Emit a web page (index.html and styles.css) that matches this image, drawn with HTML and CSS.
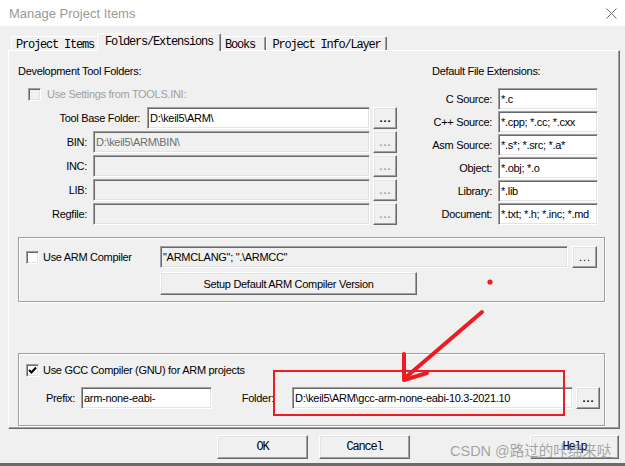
FILE: index.html
```html
<!DOCTYPE html>
<html lang="en">
  <head>
    <meta charset="UTF-8" />
    <meta name="viewport" content="width=device-width, initial-scale=1.0" />
    <title>Manage Project Items</title>

    <link rel="stylesheet" href="styles.css">
  </head>

  <body>
    <div class="titlebar">
      <span class="title">Manage Project Items</span>
      <svg class="close" width="11" height="11" viewBox="0 0 11 11">
        <path d="M0.5 0.5 L10.5 10.5 M10.5 0.5 L0.5 10.5" stroke="#6b6b6b" stroke-width="1" fill="none" />
      </svg>
    </div>

    <div class="tabs">
      <div class="tab tab-items">Project Items</div>
      <div class="tab tab-folders active">Folders/Extensions</div>
      <div class="tab tab-books">Books</div>
      <div class="tab tab-info">Project Info/Layer</div>
    </div>

    <div class="panel">
      <div class="top">
        <div class="folders">
          <div class="heading">Development Tool Folders:</div>
          <div class="check disabled">
            <span class="box"></span>
            <span>Use Settings from TOOLS.INI:</span>
          </div>
          <div class="fields">
            <div class="field base">
              <span class="label">Tool Base Folder:</span>
              <div class="edit">D:\keil5\ARM\</div>
              <button class="more">...</button>
            </div>
            <div class="field">
              <span class="label">BIN:</span>
              <div class="edit disabled">D:\keil5\ARM\BIN\</div>
              <button class="more" disabled>...</button>
            </div>
            <div class="field">
              <span class="label">INC:</span>
              <div class="edit disabled"></div>
              <button class="more" disabled>...</button>
            </div>
            <div class="field">
              <span class="label">LIB:</span>
              <div class="edit disabled"></div>
              <button class="more" disabled>...</button>
            </div>
            <div class="field">
              <span class="label">Regfile:</span>
              <div class="edit disabled"></div>
              <button class="more" disabled>...</button>
            </div>
          </div>
        </div>

        <div class="extensions">
          <div class="heading">Default File Extensions:</div>
          <div class="exts">
            <div class="ext"><span class="label">C Source:</span><div class="edit">*.c</div></div>
            <div class="ext"><span class="label">C++ Source:</span><div class="edit">*.cpp; *.cc; *.cxx</div></div>
            <div class="ext"><span class="label">Asm Source:</span><div class="edit">*.s*; *.src; *.a*</div></div>
            <div class="ext"><span class="label">Object:</span><div class="edit">*.obj; *.o</div></div>
            <div class="ext"><span class="label">Library:</span><div class="edit">*.lib</div></div>
            <div class="ext"><span class="label">Document:</span><div class="edit">*.txt; *.h; *.inc; *.md</div></div>
          </div>
        </div>
      </div>

      <div class="group arm">
        <div class="check arm-check">
          <span class="box"></span>
          <span>Use ARM Compiler</span>
        </div>
        <div class="arm-right">
          <div class="arm-row">
            <div class="edit flat">"ARMCLANG"; ".\ARMCC"</div>
            <button class="more">...</button>
          </div>
          <button class="btn setup">Setup Default ARM Compiler Version</button>
        </div>
      </div>

      <div class="group gcc">
        <div class="check">
          <span class="box checked">
            <svg width="9" height="9" viewBox="0 0 9 9">
              <path d="M1 4 L3.5 6.5 L8 1.5" stroke="#000" stroke-width="2" fill="none" />
            </svg>
          </span>
          <span>Use GCC Compiler (GNU) for ARM projects</span>
        </div>
        <div class="gcc-row">
          <span class="prefix-label">Prefix:</span>
          <div class="edit prefix">arm-none-eabi-</div>
          <span class="folder-label">Folder:</span>
          <div class="edit folder">D:\keil5\ARM\gcc-arm-none-eabi-10.3-2021.10</div>
          <button class="more bold">...</button>
        </div>
      </div>
    </div>

    <div class="footer">
      <button class="btn">OK</button>
      <button class="btn">Cancel</button>
      <button class="btn help">Help</button>
    </div>

    <!-- annotations drawn on top of the screenshot -->
    <svg class="marks" width="625" height="466" viewBox="0 0 625 466">
      <circle cx="490" cy="282" r="2.6" fill="#ec1c24" />
      <rect x="274" y="371" width="290" height="44" fill="none" stroke="#ec1c24" stroke-width="2" />
      <g stroke="#ec1c24" stroke-width="4" stroke-linecap="round" fill="none">
        <path d="M482 312 L405 378" />
        <path d="M404 354 L404 380 L427 373" stroke-linejoin="round" />
      </g>
    </svg>
    <div class="csdn">CSDN @路过的咔绵来哒</div>
  </body>
</html>
```

FILE: styles.css
```css
* {
  box-sizing: border-box;
}

body {
  margin: 0;
  width: 625px;
  height: 466px;
  overflow: hidden;
  position: relative;
  background-color: #f0f0f0;
  font-family: "Liberation Sans", Arial, sans-serif;
  font-size: 11px;
  letter-spacing: -0.3px;
  color: #000;
  border-bottom: 3px solid #6a6a6a;
}

.titlebar {
  height: 26px;
  background: #fff;
  display: flex;
  align-items: center;
  justify-content: space-between;
  padding: 0 8px 0 9px;
}

.title {
  font-size: 13px;
  letter-spacing: 0;
  color: #9a9a9a;
}

/* tab strip */
.tabs {
  height: 24px;
  display: flex;
  align-items: flex-end;
  padding-left: 11px;
  font-family: "Liberation Mono", monospace;
  font-size: 12px;
  letter-spacing: -1.2px;
}

.tab {
  height: 14px;
  line-height: 12px;
  padding-top: 2px;
  text-align: center;
  white-space: nowrap;
  border-top: 1px solid #fff;
  border-left: 1px solid #fff;
  border-right: 1px solid #696969;
  box-shadow: inset -1px 0 #a0a0a0;
  border-radius: 2px 2px 0 0;
}

.tab-items {
  width: 88px;
}

.tab-folders {
  width: 124px;
}

.tab-books {
  width: 47px;
  padding-right: 5px;
}

.tab-info {
  width: 121px;
}

.tab.active {
  height: 18px;
  padding-top: 2px;
  margin: 0 -2px -1px;
  background: #f0f0f0;
  position: relative;
  z-index: 1;
}

/* page of the tab control */
.panel {
  margin-left: 8px;
  width: 612px;
  height: 379px;
  border-top: 1px solid #fff;
  border-left: 1px solid #fff;
  border-right: 1px solid #696969;
  border-bottom: 1px solid #696969;
  box-shadow: inset -1px -1px #a0a0a0;
  padding: 12px 21px 0 9px;
}

.top {
  display: flex;
  justify-content: space-between;
}

.folders {
  width: 379px;
}

.heading {
  height: 16px;
  line-height: 16px;
}

.check {
  display: flex;
  align-items: center;
  height: 16px;
  gap: 4px;
}

.check.disabled {
  margin-top: 7px;
  padding-left: 10px;
  gap: 6px;
  color: #a0a0a0;
}

.box {
  width: 13px;
  height: 13px;
  flex: none;
  display: flex;
  align-items: center;
  justify-content: center;
  background: #fff;
  border: 1px solid;
  border-color: #a0a0a0 #fff #fff #a0a0a0;
  box-shadow: inset 1px 1px #696969, inset -1px -1px #e3e3e3;
}

.disabled .box {
  background: #f0f0f0;
}

.fields {
  margin-top: 5px;
  display: flex;
  flex-direction: column;
  gap: 2px;
}

.field {
  display: flex;
  align-items: center;
  height: 22px;
}

.field .label {
  width: 69px;
  margin-right: 6px;
  text-align: right;
}

.field.base .label {
  width: 122px;
  margin-right: 7px;
}

.edit {
  flex: 1;
  height: 22px;
  line-height: 20px;
  padding: 0 2px;
  white-space: nowrap;
  overflow: hidden;
  background: #fff;
  border: 1px solid;
  border-color: #a0a0a0 #fff #fff #a0a0a0;
  box-shadow: inset 1px 1px #696969, inset -1px -1px #e3e3e3;
}

.edit.disabled,
.edit.flat {
  background: #f0f0f0;
}

.edit.disabled {
  color: #6d6d6d;
}

button {
  font: inherit;
  letter-spacing: inherit;
  color: #000;
  padding: 0;
  background: #f0f0f0;
  border: 1px solid;
  border-color: #fff #696969 #696969 #fff;
  box-shadow: inset -1px -1px #a0a0a0, inset 1px 1px #e3e3e3;
}

.more {
  flex: none;
  width: 24px;
  height: 22px;
  margin-left: 3px;
  font-weight: bold;
  letter-spacing: 1px;
  line-height: 20px;
  padding-left: 1px;
}

.more:disabled {
  color: #a0a0a0;
}

.extensions {
  width: 178px;
}

.extensions .heading {
  padding-left: 12px;
}

.exts {
  margin-top: 9px;
  display: flex;
  flex-direction: column;
  gap: 1px;
}

.ext {
  display: flex;
  align-items: center;
}

.ext .label {
  width: 72px;
  margin-right: 6px;
  text-align: right;
}

.ext .edit {
  flex: none;
  width: 100px;
}

/* group boxes */
.group {
  margin-right: -7px;
  border: 1px solid #a0a0a0;
  box-shadow: inset 1px 1px #fff, 1px 1px #fff;
}

.arm {
  margin-top: 12px;
  height: 65px;
  padding: 8px 7px 0 7px;
  display: flex;
}

.arm-check {
  width: 134px;
  height: 22px;
}

.arm-right {
  flex: 1;
  display: flex;
  flex-direction: column;
  gap: 4px;
}

.arm-row {
  display: flex;
}

.arm-row .more {
  width: 25px;
  margin-left: 4px;
  font-weight: normal;
}

.setup {
  width: 257px;
  height: 23px;
}

.gcc {
  margin-top: 51px;
  height: 73px;
  padding: 8px 4px 0 7px;
}

.gcc-row {
  display: flex;
  align-items: center;
  height: 22px;
  margin-top: 9px;
}

.prefix-label {
  width: 49px;
  margin-right: 6px;
  text-align: right;
}

.edit.prefix {
  flex: none;
  width: 131px;
}

.folder-label {
  width: 62px;
  margin-right: 18px;
  text-align: right;
}

.edit.folder {
  flex: none;
  width: 281px;
}

/* dialog buttons */
.footer {
  display: flex;
  gap: 11px;
  padding: 6px 0 0 217px;
}

.footer .btn {
  width: 91px;
  height: 24px;
  font-family: "Liberation Mono", monospace;
  font-size: 12px;
  letter-spacing: -1.2px;
}

.footer .help {
  width: 89px;
  margin-left: 109px;
}

.marks {
  position: absolute;
  left: 0;
  top: 0;
  pointer-events: none;
}

.csdn {
  position: absolute;
  left: 450px;
  top: 439px;
  font-family: "Liberation Sans", "Noto Sans CJK SC", sans-serif;
  font-size: 14.5px;
  letter-spacing: 0;
  color: rgba(110, 110, 110, 0.6);
  pointer-events: none;
}
```
